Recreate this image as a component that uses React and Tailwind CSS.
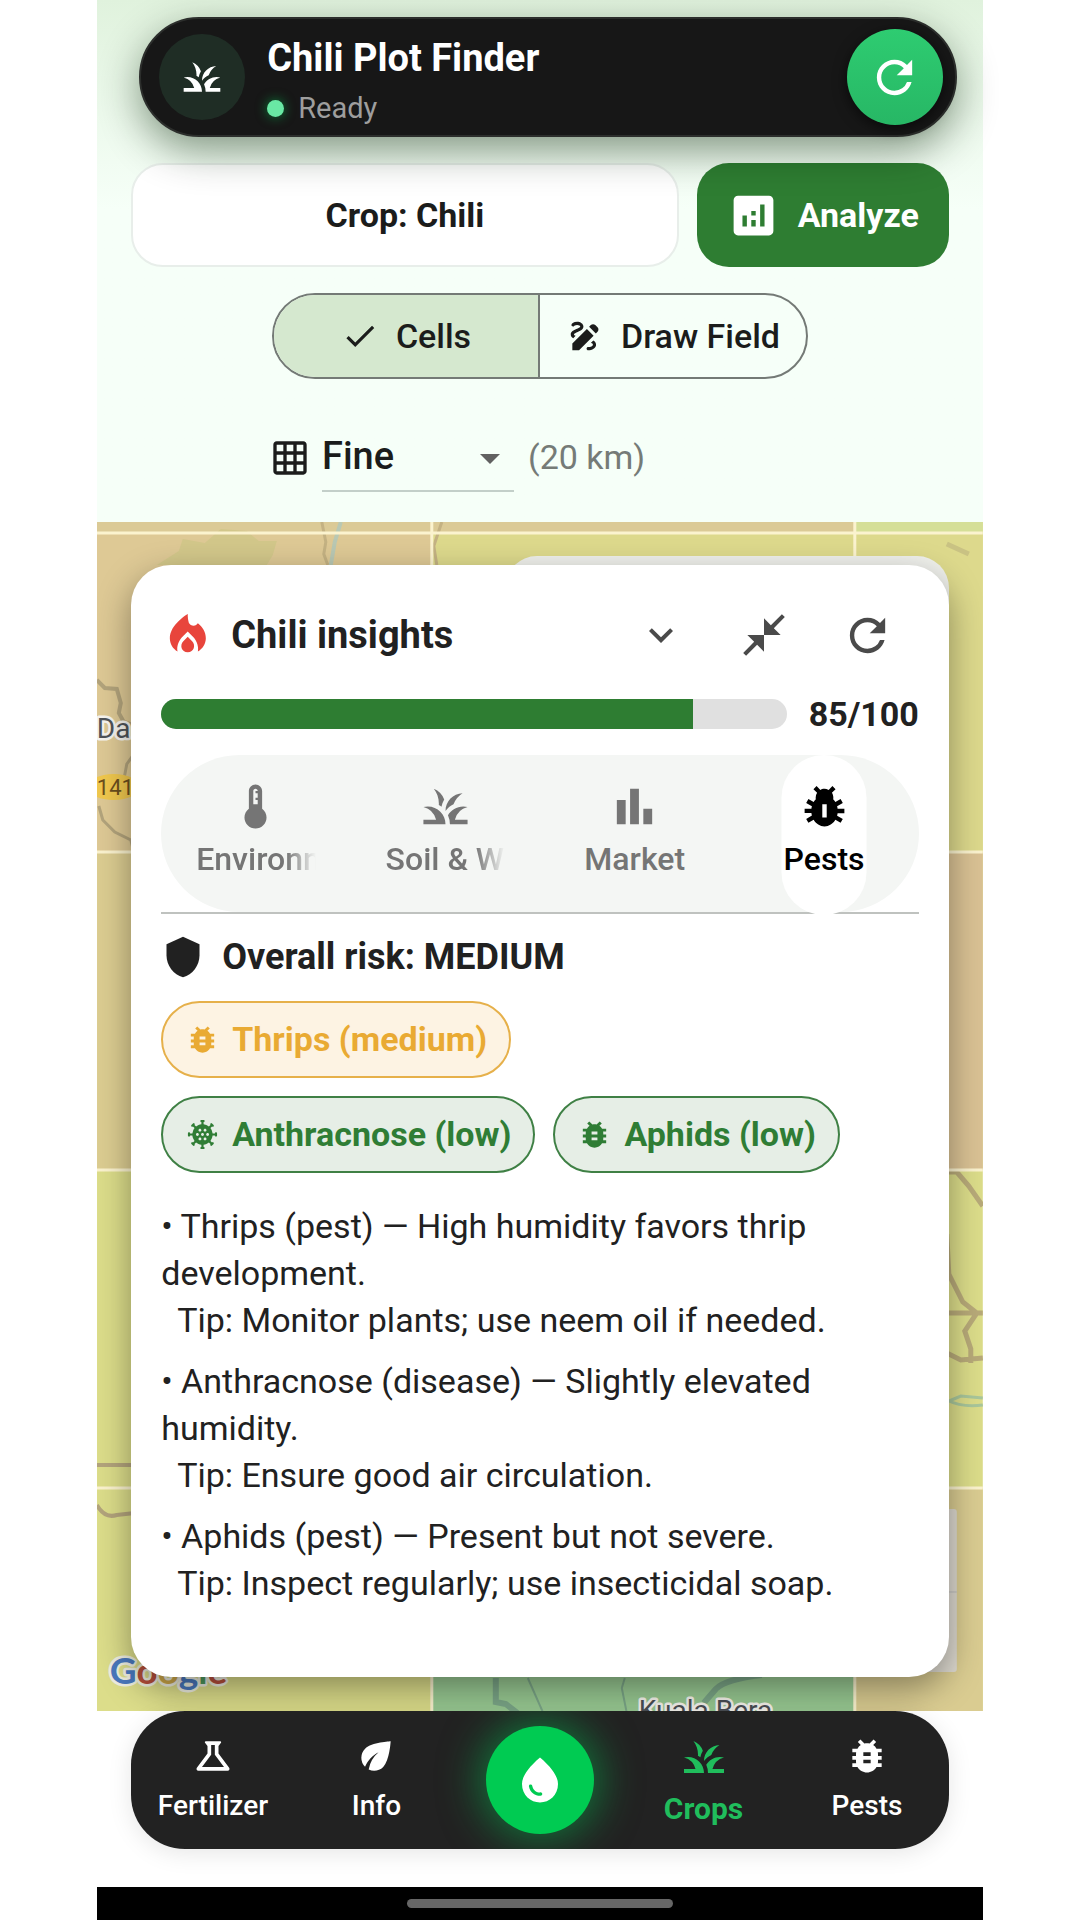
import React from "react";
import {
  MdGrass,
  MdRefresh,
  MdAnalytics,
  MdCheck,
  MdDraw,
  MdGridOn,
  MdArrowDropDown,
  MdExpandMore,
  MdCloseFullscreen,
  MdDeviceThermostat,
  MdBarChart,
  MdPestControl,
  MdShield,
  MdBugReport,
  MdCoronavirus,
  MdOutlineScience,
  MdEco,
  MdWaterDrop,
} from "react-icons/md";

function FlameIcon() {
  return (
    <svg viewBox="0 0 24 24" aria-hidden="true" className="size-[53px] shrink-0 fill-[#e8453c]">
      <path d="M12.1 2.3C12.1 2.3 4 7 4 13.3c0 2.6 1.4 4.8 3.5 6C7 17 7.9 14.6 9.5 12.8L12.1 10.2l2.6 2.6c1.6 1.8 2.4 4.2 2 6.5 2.1-1.2 3.6-3.4 3.6-6 0-2.8-1.5-5.2-3.6-6.8l-.8.7c-.9.7-2.7.4-3.3-1-.4-1.2-.5-2.5-.5-3.9z" />
      <path d="M12.1 12.6l-2 2c-1.7 1.7-.9 5 2 5s3.7-3.3 2-5z" />
    </svg>
  );
}

function Header() {
  return (
    <header className="relative z-10 mr-[26px] ml-[42px] flex h-[120px] items-center rounded-full border-2 border-[#2c2e2c] bg-[#171717] pr-3 pl-[18px] shadow-[0_14px_40px_rgba(0,30,0,0.45)]">
      <div className="flex size-[86px] shrink-0 items-center justify-center rounded-full bg-[#1f2d25] text-white">
        <MdGrass size={44} />
      </div>
      <div className="ml-[22px] flex-1 pt-2">
        <h1 className="text-[38px] leading-[44px] font-bold text-white">Chili Plot Finder</h1>
        <p className="mt-[10px] flex items-center gap-[14px] text-[29px] leading-[36px] text-[#9e9e9e]">
          <span className="size-[17px] rounded-full bg-[#69e8a4] shadow-[0_0_12px_rgba(0,200,83,0.6)]" />
          Ready
        </p>
      </div>
      <button aria-label="Refresh" className="flex size-24 items-center justify-center rounded-full bg-gradient-to-b from-[#2ecc71] to-[#27b765] text-white shadow-[0_4px_14px_rgba(0,0,0,0.6)]">
        <MdRefresh size={53} />
      </button>
    </header>
  );
}

function Controls() {
  return (
    <div className="px-[34px] pt-[26px] pb-[30px] text-[#1b1c1b]">
      <div className="flex gap-[18px]">
        <button className="h-[104px] flex-1 rounded-[32px] border-2 border-[#e8eeea] bg-white text-[34px] font-bold">
          Crop: Chili
        </button>
        <button className="flex h-[104px] items-center gap-[18px] rounded-[32px] bg-[#2e7d32] px-[30px] text-[34px] font-bold text-white">
          <MdAnalytics size={53} />
          Analyze
        </button>
      </div>
      <div className="mx-auto mt-[26px] grid h-[86px] w-[536px] grid-cols-2 overflow-hidden rounded-full border-2 border-[#747a76] text-[34px] font-medium">
        <button aria-pressed="true" className="flex items-center justify-center gap-[17px] border-r-2 border-[#747a76] bg-[#d5e8cf]">
          <MdCheck size={38} />
          Cells
        </button>
        <button aria-pressed="false" className="flex items-center justify-center gap-[17px]">
          <MdDraw size={38} />
          Draw Field
        </button>
      </div>
      <div className="mx-auto mt-11 flex h-[69px] w-[540px] items-center">
        <MdGridOn size={40} className="shrink-0" />
        <div className="relative ml-3 h-full w-[192px] border-b-2 border-[#c3cfc9]">
          <select aria-label="Grid resolution" defaultValue="fine" className="h-full w-full appearance-none bg-transparent text-[38px] font-medium">
            <option value="fine">Fine</option>
            <option value="medium">Medium</option>
            <option value="coarse">Coarse</option>
          </select>
          <MdArrowDropDown size={48} className="pointer-events-none absolute top-[11px] right-0 text-[#616161]" />
        </div>
        <span className="ml-[14px] text-[34px] text-[#757b77]">(20 km)</span>
      </div>
    </div>
  );
}

function MapBackdrop() {
  return (
    <svg
      aria-hidden="true"
      viewBox="0 0 886 1189"
      preserveAspectRatio="xMidYMid slice"
      className="absolute inset-0 h-full w-full"
      fontFamily="Roboto, sans-serif"
    >
      <rect width="886" height="1189" fill="#dcdd8a" />
      <rect width="758" height="11" fill="#dbca96" />
      <rect x="758" width="128" height="11" fill="#d5df97" />
      <rect y="11" width="335" height="319" fill="#dec995" />
      <rect x="335" y="11" width="551" height="319" fill="#ddd98c" />
      <rect y="330" width="335" height="318" fill="#dccd91" />
      <rect x="758" y="330" width="128" height="318" fill="#dac294" />
      <rect x="335" y="966" width="423" height="223" fill="#98c992" />
      <rect x="758" y="966" width="128" height="223" fill="#dacc91" />
      <path d="M60 43l22-14 4-12 22 4 16-14 26 2 12 10 18 0-4 14-6 10z" fill="#d2c78a" />
      <path d="M225 0l4 20-2 12 4 11M345 0l-8 24 3 19" fill="none" stroke="#c4b283" strokeWidth="3" />
      <path d="M244 0l-6 20-4 23" fill="none" stroke="#b9c8b3" strokeWidth="4" />
      <path d="M850 22l22 10" stroke="#c9c283" strokeWidth="5" />
      <g fill="none" stroke="#b3a47c" strokeWidth="4">
        <path d="M0 158l8 8 12 1 4 14-2 10 5 9 12 4" />
        <path d="M40 228l-10 14-3 16-12 16M2 284l4 14 12 12 16 8 2 8" strokeWidth="3" />
        <path d="M0 943h40M0 983q8 14 20 10l18-2" />
      </g>
      <g fill="none" stroke="#b8aa79" strokeWidth="6">
        <path d="M846 650h14l12 14 14 20M850 712l2 40 14 28 14 11-12 18 6 18v14M848 791h38M848 830l16 8 22-2" strokeWidth="5" />
      </g>
      <path d="M850 880l14-6 22 2M850 878q16 8 36 5" fill="none" stroke="#a9c79b" strokeWidth="3" />
      <g fill="none" stroke="#7ba687">
        <path d="M399 1156v24l10 2 18 14" strokeWidth="6" />
        <path d="M431 1156l15 34M528 1156l-3 10 5 25" strokeWidth="2" />
        <path d="M665 1153q-36 4-46 14l-12 14" strokeWidth="6" />
      </g>
      <g stroke="#fbf3cf" strokeWidth="3">
        <path d="M0 11h886M0 330h886M0 648h886M0 966h886M335 0v1189M758 0v1189" />
      </g>
      <rect x="812" y="987" width="48" height="163" rx="3" fill="#dedad0" />
      <path d="M830 1070h30" stroke="#bdbdbd" strokeWidth="1" />
      <g stroke="#f6f4ee" strokeWidth="5" paintOrder="stroke" strokeLinejoin="round">
        <text x="0" y="216" fontSize="28" fill="#4f5358">Da</text>
        <text x="542" y="1198" fontSize="28" fill="#4b4f54">Kuala Bera</text>
      </g>
      <ellipse cx="17" cy="265" rx="26" ry="13" fill="#f0c84e" />
      <text x="0" y="273" fontSize="22" fill="#6b4f1d">141</text>
      <text x="13" y="1162" fontSize="37" fontFamily="Lato, sans-serif" fontWeight="700" stroke="#eeeee0" strokeWidth="5" paintOrder="stroke" strokeLinejoin="round">
        <tspan fill="#4a78bd">G</tspan>
        <tspan fill="#b8503c">o</tspan>
        <tspan fill="#cfa94a">o</tspan>
        <tspan fill="#4a78bd">g</tspan>
        <tspan fill="#4e9a5c">l</tspan>
        <tspan fill="#b8503c">e</tspan>
      </text>
    </svg>
  );
}

const tabs = [
  { label: "Environment", Icon: MdDeviceThermostat },
  { label: "Soil & Water", Icon: MdGrass },
  { label: "Market", Icon: MdBarChart },
  { label: "Pests", Icon: MdPestControl, active: true },
];

function Tabs() {
  return (
    <div className="mt-[21px] border-b-2 border-[#bfc2bf]">
      <div role="tablist" className="grid h-[157px] grid-cols-4 rounded-full bg-[#f4f6f4] text-[#757575]">
        {tabs.map(({ label, Icon, active }) => (
          <button
            key={label}
            role="tab"
            aria-selected={Boolean(active)}
            className={
              active
                ? "relative flex min-w-0 flex-col items-center px-[35px] pt-[25px] text-black"
                : "relative flex min-w-0 flex-col items-center px-[35px] pt-[25px]"
            }
          >
            {active && <span className="absolute top-0 left-1/2 h-40 w-[85px] -translate-x-1/2 rounded-full bg-white" />}
            <Icon size={53} className="relative shrink-0" />
            <span
              className={
                label.length > 8
                  ? "mt-1 w-full overflow-hidden text-left text-[32px] leading-[44px] font-medium whitespace-nowrap [mask-image:linear-gradient(to_right,black_75%,transparent)]"
                  : "relative mt-1 text-[32px] leading-[44px] font-medium whitespace-nowrap"
              }
            >
              {label}
            </span>
          </button>
        ))}
      </div>
    </div>
  );
}

const riskGroups = [
  {
    level: "medium",
    style: "border-[#e6b04a] bg-[#fdf3e3] text-[#e9aa33]",
    risks: [{ label: "Thrips (medium)", Icon: MdBugReport }],
  },
  {
    level: "low",
    style: "border-[#3f8045] bg-[#e6eee6] text-[#2f7d35]",
    risks: [
      { label: "Anthracnose (low)", Icon: MdCoronavirus },
      { label: "Aphids (low)", Icon: MdBugReport },
    ],
  },
];

const notes = [
  { text: "• Thrips (pest) — High humidity favors thrip development.", tip: "Tip: Monitor plants; use neem oil if needed." },
  { text: "• Anthracnose (disease) — Slightly elevated humidity.", tip: "Tip: Ensure good air circulation." },
  { text: "• Aphids (pest) — Present but not severe.", tip: "Tip: Inspect regularly; use insecticidal soap." },
];

function InsightsCard() {
  const score = 85;
  return (
    <section className="relative rounded-[40px] bg-white px-[30px] pt-[18px] pb-[70px] text-[#212121] shadow-[0_12px_34px_rgba(0,0,0,0.38)]">
      <div className="flex h-[104px] items-center">
        <FlameIcon />
        <h2 className="ml-[17px] flex-1 text-[38px] font-bold">Chili insights</h2>
        <div className="flex text-[#4a4a4a]">
          <button aria-label="Collapse" className="flex h-[104px] w-[103px] items-center justify-center">
            <MdExpandMore size={48} />
          </button>
          <button aria-label="Shrink" className="flex h-[104px] w-[103px] items-center justify-center">
            <MdCloseFullscreen size={50} />
          </button>
          <button aria-label="Reload insights" className="flex h-[104px] w-[103px] items-center justify-center">
            <MdRefresh size={53} />
          </button>
        </div>
      </div>
      <div className="mt-[7px] flex items-center gap-[22px]">
        <div role="progressbar" aria-label="Score" aria-valuenow={score} className="h-[30px] flex-1 overflow-hidden rounded-full bg-[#e0e0e0]">
          <div className="h-full bg-[#2e7d32]" style={{ width: `${score}%` }} />
        </div>
        <span className="text-[34px] leading-10 font-bold">{score}/100</span>
      </div>
      <Tabs />
      <div className="mt-[21px] flex h-11 items-center gap-[17px]">
        <MdShield size={44} />
        <h3 className="text-[36px] font-bold">Overall risk: MEDIUM</h3>
      </div>
      <div className="mt-[22px] flex flex-col gap-[18px]">
        {riskGroups.map(({ level, style, risks }) => (
          <ul key={level} className="flex flex-wrap gap-[18px]">
            {risks.map(({ label, Icon }) => (
              <li key={label} className={`flex h-[77px] items-center gap-3 rounded-full border-2 px-[22px] text-[34px] font-bold ${style}`}>
                <Icon size={35} />
                {label}
              </li>
            ))}
          </ul>
        ))}
      </div>
      <div className="mt-[30px] flex flex-col gap-[14px] text-[34px] leading-[47px]">
        {notes.map(({ text, tip }) => (
          <div key={tip}>
            <p>{text}</p>
            <p className="pl-4">{tip}</p>
          </div>
        ))}
      </div>
    </section>
  );
}

function NavItem({ label, Icon, active }) {
  return (
    <a
      href="#"
      aria-current={active ? "page" : undefined}
      className={
        active
          ? "flex flex-1 flex-col items-center pt-[22px] text-[30px] leading-9 font-bold text-[#20bd5c]"
          : "flex flex-1 flex-col items-center pt-[23px] text-[28px] leading-9 font-medium text-white"
      }
    >
      <Icon size={active ? 48 : 44} />
      <span className="mt-[10px]">{label}</span>
    </a>
  );
}

function BottomNav() {
  return (
    <nav className="relative mx-[34px] mb-[38px] flex h-[138px] overflow-hidden rounded-[54px] bg-[#222222] shadow-[0_4px_24px_rgba(0,0,0,0.1)]">
      <NavItem label="Fertilizer" Icon={MdOutlineScience} />
      <NavItem label="Info" Icon={MdEco} />
      <div className="flex flex-1 items-center justify-center">
        <button aria-label="Irrigation" className="flex size-[108px] items-center justify-center rounded-full bg-[#00cb52] text-white shadow-[0_0_40px_6px_rgba(0,200,83,0.5)]">
          <MdWaterDrop size={54} />
        </button>
      </div>
      <NavItem label="Crops" Icon={MdGrass} active />
      <NavItem label="Pests" Icon={MdBugReport} />
    </nav>
  );
}

export default function App() {
  return (
    <div className="min-h-screen bg-white font-[Roboto,sans-serif]">
      <div className="mx-auto flex min-h-screen w-[82%] flex-col">
        <div className="bg-gradient-to-b from-[#e0f2dd] via-[#f6fff8] via-40% to-[#f6fff8] pt-[17px]">
          <Header />
          <Controls />
        </div>
        <main className="relative flex-1 overflow-hidden px-[34px] pt-[43px] pb-[34px]">
          <MapBackdrop />
          <div className="absolute top-[34px] right-[34px] h-40 w-[444px] rounded-[32px] bg-[#f0f1ec]" />
          <InsightsCard />
        </main>
        <BottomNav />
        <footer className="flex h-[33px] items-center justify-center bg-black">
          <div className="h-[9px] w-[266px] rounded-full bg-[#666666]" />
        </footer>
      </div>
    </div>
  );
}
